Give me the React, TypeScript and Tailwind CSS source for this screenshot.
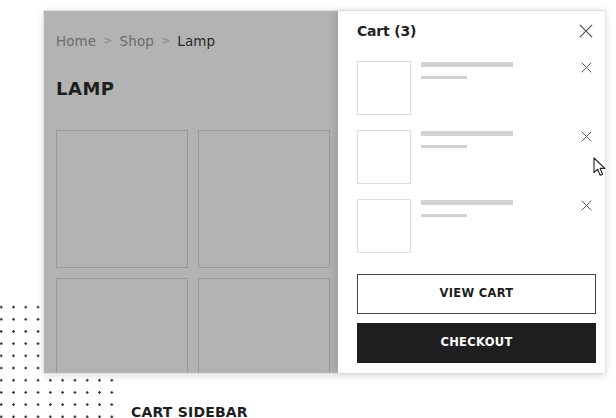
import React from "react";

const items = [1, 2, 3];

function CloseIcon({ size, className, width = 1.2 }: { size: number; className?: string; width?: number }) {
  return (
    <svg width={size} height={size} viewBox="0 0 16 16" className={className} fill="none" stroke="currentColor" strokeWidth={width}>
      <path d="M1 1L15 15M15 1L1 15" />
    </svg>
  );
}

function Cursor() {
  return (
    <svg width="13" height="20" viewBox="0 0 13 20" className="absolute left-[593px] top-[157px]">
      <path d="M1 1L1 15.5L4.6 12.3L7.2 18.3L9.6 17.2L7.1 11.4L11.8 11.4Z" fill="#fff" stroke="#222" strokeWidth={1.1} strokeLinejoin="round" />
    </svg>
  );
}

export default function App() {
  return (
    <div
      className="relative w-[616px] h-[418px] overflow-hidden bg-white"
      style={{ fontFamily: '"DejaVu Sans", "Noto Sans", sans-serif' }}
    >
      {/* dotted decoration behind the frame */}
      <div className="absolute left-0 top-[301px] w-[117px] h-[130px] bg-[radial-gradient(circle,#2a2a2a_1px,transparent_1.4px)] bg-size-[12.3px_12.2px] bg-position-[-5px_0px]" />

      <div className="relative ml-[43px] mt-[10px] w-[563px] h-[364px] flex border border-[#e4e4e4] shadow-[0_2px_8px_rgba(0,0,0,0.12)] bg-white">
        {/* dimmed page */}
        <div className="w-[294px] h-full bg-[#b3b3b3] pl-[12px] pr-[8px] pt-[20px] overflow-hidden">
          <div className="flex items-center gap-[7px] text-[13.5px] tracking-[0.1px]">
            <span className="text-[#6c6c6c]">Home</span>
            <span className="text-[#8a8a8a] text-[11px]">&gt;</span>
            <span className="text-[#6c6c6c]">Shop</span>
            <span className="text-[#8a8a8a] text-[11px]">&gt;</span>
            <span className="text-[#2b2b2b]">Lamp</span>
          </div>
          <div className="mt-[29px] text-[18px] font-bold text-[#1e1e1e] tracking-[0.5px] leading-none">LAMP</div>
          <div className="mt-[32px] grid grid-cols-2 gap-[10px]">
            <div className="h-[138px] border border-[#999999]" />
            <div className="h-[138px] border border-[#999999]" />
            <div className="h-[138px] border border-[#999999]" />
            <div className="h-[138px] border border-[#999999]" />
          </div>
        </div>

        {/* cart sidebar */}
        <div className="flex-1 h-full bg-white pl-[19px] pr-[9px] pt-[11px] flex flex-col shadow-[-5px_0_7px_rgba(0,0,0,0.09)]">
          <div className="flex items-center justify-between h-[18px]">
            <span className="text-[14px] font-bold text-[#222] leading-none tracking-[-0.2px]">Cart (3)</span>
            <CloseIcon size={14} className="text-[#444] mr-[3px]" />
          </div>
          <div className="mt-[21px] flex flex-col gap-[15px]">
            {items.map((i) => (
              <div key={i} className="flex items-start">
                <div className="w-[54px] h-[54px] border border-[#dcdcdc]" />
                <div className="ml-[10px] flex flex-col pt-[1px]">
                  <div className="w-[92px] h-[5px] bg-[#d2d2d2]" />
                  <div className="mt-[9px] w-[46px] h-[3px] bg-[#d2d2d2]" />
                </div>
                <CloseIcon size={11} width={1.4} className="ml-auto mr-[4px] mt-[1px] text-[#555]" />
              </div>
            ))}
          </div>
          <div className="mt-[21px] h-[40px] border border-[#444] flex items-center justify-center text-[11.5px] font-bold text-[#1e1e1e] tracking-[0.3px]">
            VIEW CART
          </div>
          <div className="mt-[9px] h-[40px] bg-[#1f1f21] flex items-center justify-center text-[11.5px] font-bold text-white tracking-[0.3px]">
            CHECKOUT
          </div>
        </div>
      </div>

      <div className="ml-[131px] mt-[31px] text-[14px] font-bold text-[#1e1e1e] tracking-[0.2px] leading-none">
        CART SIDEBAR
      </div>

      <Cursor />
    </div>
  );
}
